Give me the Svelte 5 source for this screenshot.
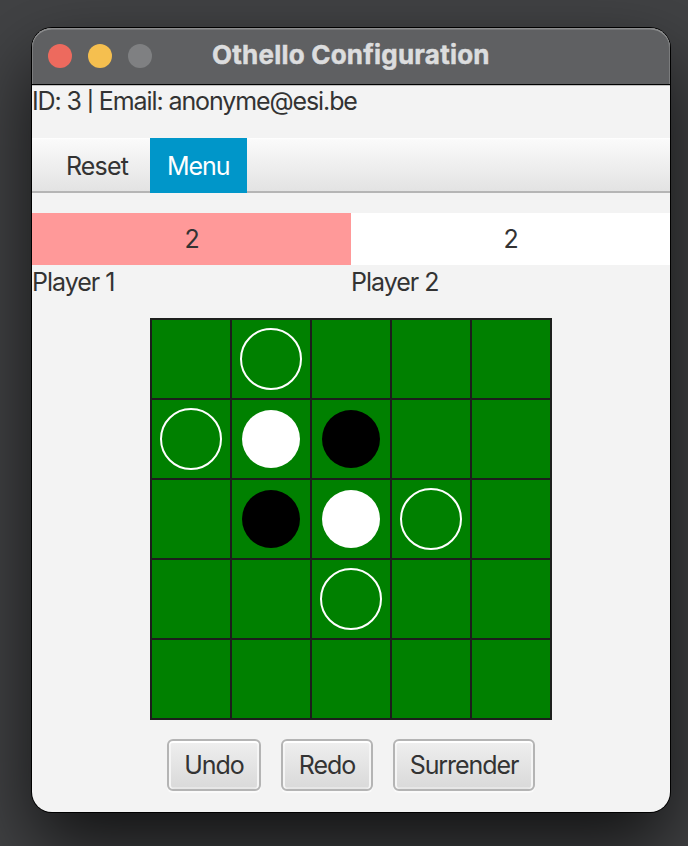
<script>
  const players = [
    { name: 'Player 1', score: 2, active: true },
    { name: 'Player 2', score: 2, active: false }
  ];
  // '.' empty, 'o' playable square, 'W' white disc, 'B' black disc
  const rows = ['.o...', 'oWB..', '.BWo.', '..o..', '.....'];
  const kinds = { o: 'hint', W: 'white', B: 'black' };
  const cells = rows.join('').split('');
</script>

<main class="desktop">
  <section class="window">
    <header class="titlebar">
      <div class="lights">
        <i class="close"></i><i class="minimize"></i><i class="zoom"></i>
      </div>
      <h1>Othello Configuration</h1>
    </header>
    <p class="account">ID: 3 <span class="bar">|</span> Email: anonyme@esi.be</p>
    <nav>
      <span class="item reset">Reset</span>
      <span class="item menu">Menu</span>
    </nav>
    <div class="players">
      {#each players as p}
        <div class="player">
          <div class="score" class:active={p.active}>{p.score}</div>
          <div class="name">{p.name}</div>
        </div>
      {/each}
    </div>
    <div class="board">
      {#each cells as c}
        <div class="cell">
          {#if kinds[c]}<span class="disc {kinds[c]}"></span>{/if}
        </div>
      {/each}
    </div>
    <footer>
      <button class="undo">Undo</button>
      <button class="redo">Redo</button>
      <button class="surrender">Surrender</button>
    </footer>
  </section>
</main>

<style>
  :global(body) { margin: 0; }
  .desktop {
    box-sizing: border-box;
    width: 688px;
    height: 846px;
    padding: 28px 0 0 32px;
    overflow: hidden;
    background: #414244;
    font-family: Inter, 'Liberation Sans', sans-serif;
    font-size: 25px;
    color: #333;
  }
  .window {
    display: flex;
    flex-direction: column;
    width: 638px;
    height: 784px;
    border-radius: 20px;
    background: #f3f3f3;
    box-shadow: 0 0 0 1px #000, 0 34px 76px rgba(0, 0, 0, 0.72);
    letter-spacing: -1.07px;
    white-space: nowrap;
  }
  .titlebar {
    display: flex;
    align-items: center;
    box-sizing: border-box;
    height: 57px;
    padding: 0 0 1px 16px;
    border-bottom: 1px solid #000;
    border-radius: 20px 20px 0 0;
    background: #5f6062;
    box-shadow: inset 0 2px 0 -0.5px #8b8c8d, inset 1px 0 0 #7b7c7d, inset -1px 0 0 #7b7c7d, 0 1px 0 #c0c0c0;
  }
  .lights { display: flex; gap: 16px; width: 164px; }
  .lights i { width: 24px; height: 24px; border-radius: 50%; }
  .close { background: #ed6a5e; }
  .minimize { background: #f5bf4f; }
  .zoom { background: #7f8082; }
  h1 {
    margin: 0 0 2px;
    color: #dcddde;
    font-size: 26px;
    font-weight: 700;
    letter-spacing: 0.22px;
    line-height: 32px;
    -webkit-text-stroke: 0.5px #dcddde;
  }
  .account { height: 53px; margin: 0; line-height: 32px; letter-spacing: -1.1px; }
  .bar { display: inline-block; margin: 0 -0.6px; transform: scaleY(0.8); }
  nav {
    display: flex;
    box-sizing: border-box;
    height: 55px;
    padding-left: 17px;
    line-height: 56px;
    background: linear-gradient(#fff, #fafafa 2px, #e3e3e3 53px, #b5b5b5 53px);
  }
  .item { box-sizing: border-box; padding-left: 17px; }
  .reset { width: 101px; letter-spacing: -0.85px; }
  .menu { width: 97px; background: #0096c9; color: #fff; }
  .players { display: flex; margin-top: 20px; }
  .player { flex: 1; }
  .score { height: 52px; line-height: 52px; text-align: center; background: #fff; }
  .score.active { background: #ff9999; }
  .name { height: 53px; line-height: 34px; letter-spacing: -1px; }
  .board {
    display: grid;
    grid-template-columns: repeat(5, 78px);
    grid-auto-rows: 78px;
    gap: 2px;
    align-self: center;
    padding: 2px;
    background: #1c1f1c;
  }
  .cell { display: grid; place-items: center; background: #008000; }
  .disc { box-sizing: border-box; width: 58px; height: 58px; border-radius: 50%; }
  .white { background: #fff; }
  .black { background: #000; }
  .hint { width: 62px; height: 62px; border: 2px solid #fff; }
  footer { display: flex; justify-content: center; gap: 20px; margin-top: 19px; }
  button {
    box-sizing: border-box;
    height: 52px;
    padding: 0;
    border: 2px solid #b4b4b4;
    border-radius: 6px;
    background: linear-gradient(#efefef, #d9d9d9);
    box-shadow: inset 0 2px 0 #fff, inset 2px 0 0 #f5f5f5, inset -2px 0 0 #f5f5f5, inset 0 -2px 0 #e6e6e6, 0 2px 0 #fafafa;
    color: #333;
    font: inherit;
    letter-spacing: inherit;
    line-height: 48px;
  }
  .undo { width: 94px; }
  .redo { width: 92px; }
  .surrender { width: 142px; }
</style>
